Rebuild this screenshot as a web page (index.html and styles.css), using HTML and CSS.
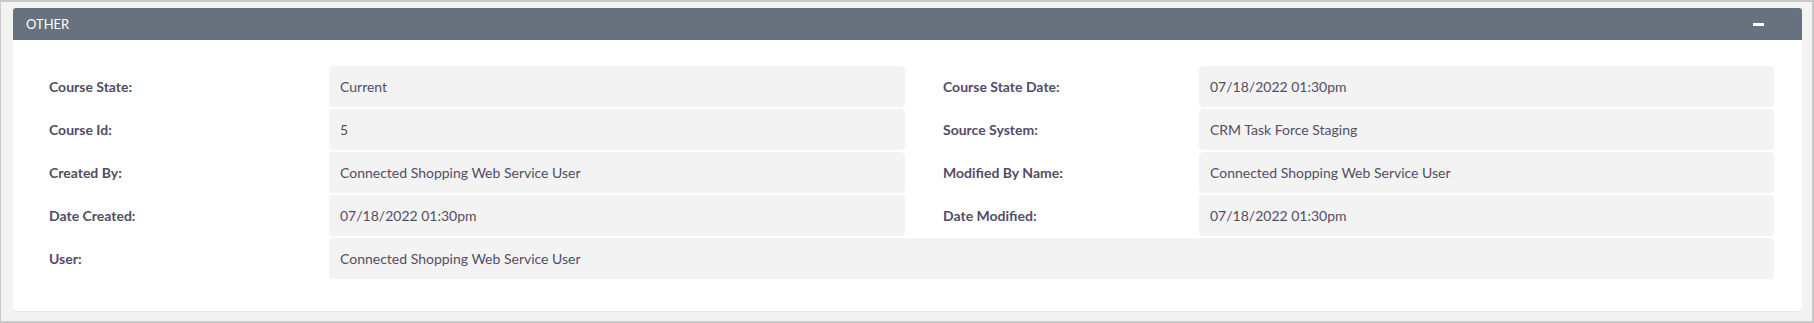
FILE: index.html
```html
<!DOCTYPE html>
<html lang="en">

<head>
    <meta charset="UTF-8">
    <meta name="viewport" content="width=device-width, initial-scale=1.0">
    <title>Other</title>
    <link rel="stylesheet" href="styles.css">
</head>

<body>
    <div class="frame">
        <div class="panel">
            <div class="panel-heading">
                <span class="title">OTHER</span>
                <span class="toggle"></span>
            </div>
            <div class="panel-body">
                <div class="label">Course State:</div>
                <div class="field">Current</div>
                <div class="label right">Course State Date:</div>
                <div class="field">07/18/2022 01:30pm</div>

                <div class="label">Course Id:</div>
                <div class="field">5</div>
                <div class="label right">Source System:</div>
                <div class="field">CRM Task Force Staging</div>

                <div class="label">Created By:</div>
                <div class="field">Connected Shopping Web Service User</div>
                <div class="label right">Modified By Name:</div>
                <div class="field">Connected Shopping Web Service User</div>

                <div class="label">Date Created:</div>
                <div class="field">07/18/2022 01:30pm</div>
                <div class="label right">Date Modified:</div>
                <div class="field">07/18/2022 01:30pm</div>

                <div class="label">User:</div>
                <div class="field wide">Connected Shopping Web Service User</div>
            </div>
        </div>
    </div>
</body>

</html>
```

FILE: styles.css
```css
* {
    margin: 0;
    padding: 0;
    box-sizing: border-box;
}

body {
    width: 1814px;
    height: 323px;
    font-family: Lato, "Open Sans", sans-serif;
    font-size: 14px;
    color: #534d64;
    background-color: #f3f3f3;
}

.frame {
    height: 323px;
    padding: 6px 10px 10px 12px;
    border-style: solid;
    border-color: #c9c9c9;
    border-width: 2px 2px 2px 1px;
}

.panel {
    background-color: #fff;
    border-radius: 3px 3px 4px 4px;
    box-shadow: 0 1px 0 #e6e6e6;
}

.panel-heading {
    height: 32px;
    display: flex;
    align-items: center;
    justify-content: space-between;
    padding: 0 38px 0 13px;
    background-color: #67727e;
    color: #fff;
    border-radius: 3px 3px 0 0;
}

.title {
    font-size: 13px;
}

.toggle {
    display: inline-block;
    width: 11px;
    height: 3px;
    background-color: #fff;
}

.panel-body {
    display: grid;
    grid-template-columns: 280px 576px 294px 1fr;
    grid-auto-rows: 41px;
    row-gap: 2px;
    padding: 26px 28px 32px 36px;
}

.label {
    display: flex;
    align-items: center;
    font-weight: bold;
}

.label.right {
    padding-left: 38px;
}

.field {
    display: flex;
    align-items: center;
    padding-left: 11px;
    background-color: #f3f3f3;
    border-radius: 4px;
}

.wide {
    grid-column: 2 / -1;
}
```
